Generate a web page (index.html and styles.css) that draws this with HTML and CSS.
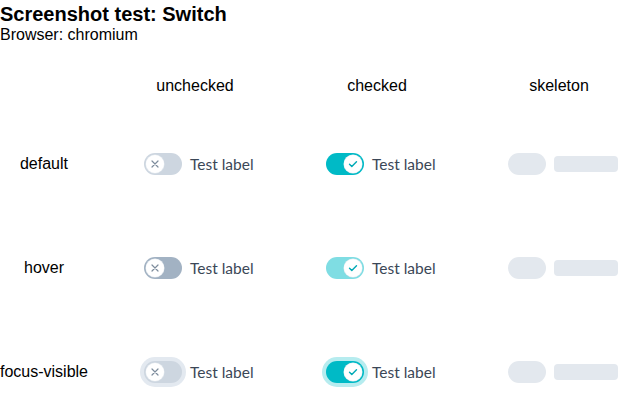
FILE: index.html
```html
<!DOCTYPE html>
<html>
<head>
<meta charset="utf-8">
<link rel="stylesheet" href="styles.css">
</head>
<body>
<h1 class="title">Screenshot test: Switch</h1>
<p class="subtitle">Browser: chromium</p>
<div class="grid">
  <div class="corner"></div>
  <div class="colhead">unchecked</div>
  <div class="colhead">checked</div>
  <div class="colhead">skeleton</div>

  <div class="rowhead">default</div>
  <div class="cell"><span class="sw"><span class="thumb"><svg viewBox="0 0 18 18"><path d="M6 6l6 6M12 6l-6 6"/></svg></span></span><span class="lbl">Test label</span></div>
  <div class="cell"><span class="sw on"><span class="thumb"><svg viewBox="0 0 18 18"><path d="M5.5 9.3l2.3 2.3 4.7-4.8"/></svg></span></span><span class="lbl">Test label</span></div>
  <div class="cell"><span class="sk-pill"></span><span class="sk-bar"></span></div>

  <div class="rowhead">hover</div>
  <div class="cell"><span class="sw hover"><span class="thumb"><svg viewBox="0 0 18 18"><path d="M6 6l6 6M12 6l-6 6"/></svg></span></span><span class="lbl">Test label</span></div>
  <div class="cell"><span class="sw on hover"><span class="thumb"><svg viewBox="0 0 18 18"><path d="M5.5 9.3l2.3 2.3 4.7-4.8"/></svg></span></span><span class="lbl">Test label</span></div>
  <div class="cell"><span class="sk-pill"></span><span class="sk-bar"></span></div>

  <div class="rowhead">focus-visible</div>
  <div class="cell"><span class="sw focus"><span class="thumb"><svg viewBox="0 0 18 18"><path d="M6 6l6 6M12 6l-6 6"/></svg></span></span><span class="lbl">Test label</span></div>
  <div class="cell"><span class="sw on focus"><span class="thumb"><svg viewBox="0 0 18 18"><path d="M5.5 9.3l2.3 2.3 4.7-4.8"/></svg></span></span><span class="lbl">Test label</span></div>
  <div class="cell"><span class="sk-pill"></span><span class="sk-bar"></span></div>
</div>
</body>
</html>
```
FILE: styles.css
```css
html { overflow: hidden; }
body {
  margin: 0;
  font-family: "Liberation Sans", Arial, sans-serif;
  color: #000;
  background: #fff;
}
.title {
  margin: 0;
  padding-top: 3px;
  font-size: 20px;
  line-height: 23px;
  font-weight: bold;
}
.subtitle {
  margin: 0;
  font-size: 16px;
  line-height: 18px;
}
.grid {
  margin-top: 16px;
  display: grid;
  grid-template-columns: 104px 182px 182px 167px;
  grid-template-rows: 52px 104px 104px 104px;
}
.colhead {
  width: 182px;
  font-size: 16px;
  text-align: center;
  display: flex;
  align-items: center;
  justify-content: center;
}
.rowhead {
  width: 88px;
  font-size: 16px;
  white-space: nowrap;
  display: flex;
  align-items: center;
  justify-content: center;
}
.cell {
  display: flex;
  align-items: center;
  padding-left: 40px;
  gap: 8px;
}
.sw {
  position: relative;
  width: 38px;
  height: 22px;
  border-radius: 11px;
  background: #cdd6e0;
  flex: none;
}
.sw.hover { background: #a2b2c3; }
.sw.on { background: #00bac6; }
.sw.on.hover { background: #7fdde3; }
.sw.focus { box-shadow: 0 0 0 4px #e3e9f0; }
.sw.on.focus { box-shadow: 0 0 0 4px #b6ecef; }
.thumb {
  position: absolute;
  top: 2px;
  left: 2px;
  width: 18px;
  height: 18px;
  border-radius: 50%;
  background: #fff;
  box-shadow: 0 0 0 0.5px #e6ebf0;
}
.sw.on .thumb { left: 18px; }
.thumb svg {
  display: block;
  width: 18px;
  height: 18px;
  fill: none;
  stroke: #7d8c9c;
  stroke-width: 1.2;
  stroke-linecap: round;
  stroke-linejoin: round;
}
.sw.on .thumb svg { stroke: #00aab6; stroke-width: 1.4; }
.lbl {
  font-family: Lato, "Noto Sans", sans-serif;
  font-size: 15.5px;
  color: #3b4757;
}
.sk-pill {
  width: 38px;
  height: 22px;
  border-radius: 11px;
  background: #e3e8ee;
  flex: none;
}
.sk-bar {
  width: 64px;
  height: 16px;
  border-radius: 4px;
  background: #e3e8ee;
  flex: none;
}
```
